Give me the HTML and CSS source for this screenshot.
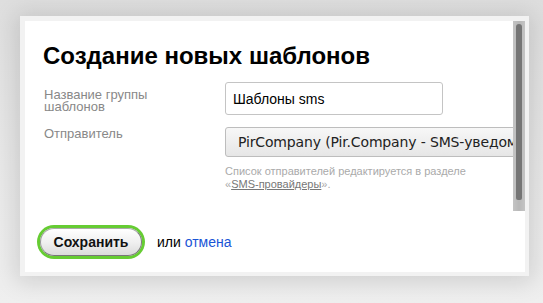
FILE: index.html
```html
<!DOCTYPE html>
<html lang="ru">
<head>
  <meta charset="UTF-8" />
  <title>Создание новых шаблонов</title>
  <link rel="stylesheet" href="styles.css">
</head>
<body>
  <div class="dialog">
    <div class="dialog-body">
      <div class="dialog-content">
        <h1>Создание новых шаблонов</h1>

        <div class="field">
          <div class="label label-input">Название группы шаблонов</div>
          <div class="value">
            <input type="text" class="input" value="Шаблоны sms" />
          </div>
        </div>

        <div class="field">
          <div class="label">Отправитель</div>
          <div class="value">
            <div class="select">PirCompany (Pir.Company - SMS-уведомления)</div>
            <div class="hint">
              Список отправителей редактируется в разделе
              «<a href="#">SMS-провайдеры</a>».
            </div>
          </div>
        </div>
      </div>

      <!-- полоса прокрутки -->
      <div class="scrollbar"><div class="scrollbar-thumb"></div></div>
    </div>

    <div class="dialog-footer">
      <button class="btn-save">Сохранить</button>
      <span class="or">или <a href="#">отмена</a></span>
    </div>
  </div>
</body>
</html>
```

FILE: styles.css
```css
body {
  margin: 0;
  height: 303px;
  overflow: hidden;
  background: linear-gradient(180deg, #dedede 0%, #e9e9e9 60%, #efefef 100%);
  font-family: 'Liberation Sans', Arial, sans-serif;
  padding-top: 16px;
  box-sizing: border-box;
}

.dialog {
  margin-left: 20px;
  width: 509px;
  height: 260px;
  box-sizing: border-box;
  border-style: solid;
  border-color: #f2f2f2;
  border-width: 5px 4px 4px 5px;
  background: #fff;
  box-shadow: 0 2px 22px 4px rgba(0, 0, 0, 0.13);
  display: flex;
  flex-direction: column;
}

.dialog-body {
  height: 190px;
  display: flex;
}

.dialog-content {
  flex: 1;
  min-width: 0;
  overflow: hidden;
  padding: 21px 0 0 18px;
}

/* Полоса прокрутки */
.scrollbar {
  width: 12px;
  flex: none;
  background: linear-gradient(90deg, #c4c4c4 0%, #b8b8b8 50%, #c4c4c4 100%);
  padding: 3px 3px 11px;
  box-sizing: border-box;
}

.scrollbar-thumb {
  height: 100%;
  border-radius: 3px 3px 2px 2px;
  background: #757575;
}

h1 {
  margin: 0;
  font-size: 24px;
  line-height: 28px;
  font-weight: bold;
  color: #000;
}

/* Строки формы */
.field {
  display: flex;
  margin-top: 12px;
}

.label {
  width: 182px;
  flex: none;
  font-size: 13px;
  line-height: 12px;
  color: #888;
  padding-top: 1px;
  padding-left: 1px;
  padding-right: 40px;
  box-sizing: border-box;
}

.label-input {
  padding-top: 7px;
}

.value {
  flex: none;
}

.input {
  display: block;
  margin: 0;
  width: 218px;
  height: 33px;
  box-sizing: border-box;
  border: 1px solid #c4c4c4;
  border-radius: 3px;
  padding: 0 7px;
  font-family: 'Liberation Sans', Arial, sans-serif;
  font-size: 14px;
  color: #000;
  background: #fff;
}

.select {
  height: 30px;
  line-height: 28px;
  box-sizing: border-box;
  border: 1px solid #bdbdbd;
  border-radius: 3px;
  padding: 0 12px;
  white-space: nowrap;
  font-family: 'DejaVu Sans', sans-serif;
  font-size: 14px;
  letter-spacing: -0.15px;
  color: #222;
  background: linear-gradient(180deg, #f7f7f7 0%, #e6e6e6 100%);
}

.hint {
  margin-top: 8px;
  width: 260px;
  font-size: 11px;
  line-height: 13px;
  color: #aaa;
}

.hint a {
  color: #777;
}

/* Подвал */
.dialog-footer {
  flex: 1;
  display: flex;
  align-items: flex-start;
  padding: 17px 0 0 15px;
  font-size: 14px;
}

.btn-save {
  margin: 0;
  width: 102px;
  height: 28px;
  border: 1px solid #777;
  border-top-color: #aaa;
  border-left-color: #999;
  border-radius: 14px;
  background: linear-gradient(180deg, #ffffff 0%, #f0f0f0 50%, #dcdcdc 100%);
  box-shadow: 0 0 0 3px #66cc33;
  font-family: 'Liberation Sans', Arial, sans-serif;
  font-size: 14px;
  font-weight: bold;
  color: #111;
  padding: 0;
}

.or {
  margin-left: 15px;
  line-height: 28px;
  color: #000;
}

.or a {
  color: #1a55d6;
  text-decoration: none;
}
```
